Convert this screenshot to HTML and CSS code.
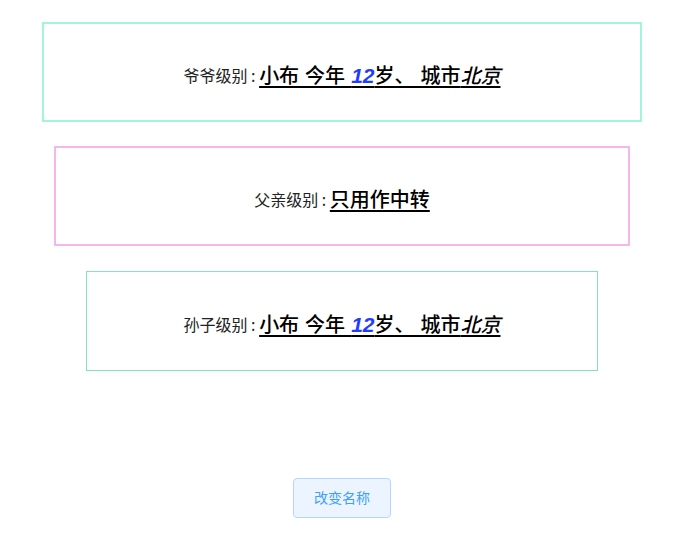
FILE: index.html
```html
<!DOCTYPE html>
<html lang="zh">
<head>
<meta charset="utf-8">
<link rel="stylesheet" href="styles.css">
</head>
<body>
<div class="page">
  <div class="box box-grand">
    <span class="label">爷爷级别 : </span><span class="value">小布 今年 <em class="age">12</em>岁、 城市<em class="city">北京</em></span>
  </div>
  <div class="box box-father">
    <span class="label">父亲级别 : </span><span class="value">只用作中转</span>
  </div>
  <div class="box box-son">
    <span class="label">孙子级别 : </span><span class="value">小布 今年 <em class="age">12</em>岁、 城市<em class="city">北京</em></span>
  </div>
  <button class="btn">改变名称</button>
</div>
</body>
</html>
```
FILE: styles.css
```css
html, body {
  margin: 0;
  padding: 0;
  background: #fff;
}
body {
  font-family: "Noto Sans CJK SC", "Noto Sans", sans-serif;
}
.page {
  width: 684px;
  display: flex;
  flex-direction: column;
  align-items: center;
  padding-top: 22px;
}
.box {
  box-sizing: border-box;
  height: 100px;
  display: flex;
  align-items: center;
  justify-content: center;
  padding-top: 5px;
}
.box-grand {
  width: 600px;
  border: 2px solid #a2f5da;
}
.box-father {
  width: 576px;
  margin-top: 24px;
  border: 2px solid #f3b6ef;
}
.box-son {
  width: 512px;
  margin-top: 25px;
  border: 1px solid #84e3bd;
}
.label {
  font-size: 16px;
  color: #222;
  white-space: pre;
}
.value {
  font-size: 20px;
  font-weight: 500;
  color: #000;
  text-decoration: underline;
  text-decoration-thickness: 2px;
  text-underline-offset: 3px;
  white-space: pre;
  word-spacing: 1.5px;
}
.age {
  font-family: "Liberation Sans", sans-serif;
  font-size: 21px;
  font-weight: bold;
  font-style: italic;
  color: #1f3cff;
}
.city {
  font-style: italic;
}
.btn {
  margin-top: 107px;
  box-sizing: border-box;
  height: 40px;
  padding: 0 20px 3px;
  font-family: "Noto Sans CJK SC", sans-serif;
  font-size: 14px;
  line-height: 1;
  color: #409eff;
  background: #ecf5ff;
  border: 1px solid #b3d8ff;
  border-radius: 4px;
}
```
